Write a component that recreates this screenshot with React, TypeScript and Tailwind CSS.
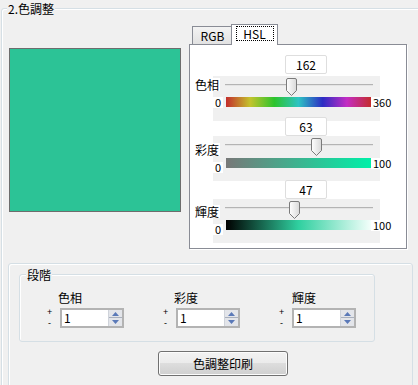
import React from "react";

const HUE_BAR =
  "bg-[linear-gradient(to_right,hsl(0,63%,47%),hsl(60,63%,47%),hsl(120,63%,47%),hsl(180,63%,47%),hsl(240,63%,47%),hsl(300,63%,47%),hsl(360,63%,47%))]";
const SAT_BAR = "bg-[linear-gradient(to_right,hsl(162,0%,47%),hsl(162,100%,47%))]";
const LUM_BAR = "bg-[linear-gradient(to_right,#000000,hsl(162,63%,50%),#f4fffb)]";

type SliderProps = {
  value: number;
  max: number;
  label: string;
  bar: string;
  boxClass: string;
  blockClass: string;
  labelClass: string;
  rowClass: string;
  zeroClass: string;
};

const Thumb = () => (
  <svg width="11" height="18" viewBox="0 0 11 18">
    <defs>
      <linearGradient id="thumbFill" x1="0" y1="0" x2="1" y2="0">
        <stop offset="0" stopColor="#ffffff" />
        <stop offset="1" stopColor="#d9d9d9" />
      </linearGradient>
    </defs>
    <path
      d="M0.5 2 Q0.5 0.5 2 0.5 H9 Q10.5 0.5 10.5 2 V12.5 L5.5 17.5 L0.5 12.5 Z"
      fill="url(#thumbFill)"
      stroke="#7b7b7b"
    />
  </svg>
);

const HslSlider = ({ value, max, label, bar, boxClass, blockClass, labelClass, rowClass, zeroClass }: SliderProps) => {
  const left = Math.floor((value / max) * 137);
  return (
    <div className="flex flex-col">
      <div
        className={`relative z-10 ml-[95px] w-[42px] h-[19px] border border-[#dedede] rounded-[2px] bg-white text-center text-[12px] leading-[17px] ${boxClass}`}
      >
        {value}
      </div>
      <div className={`ml-[23px] w-[167px] bg-[#f0f0f0] ${blockClass}`}>
        <div className="flex items-start pt-[2px]">
          <div className={`shrink-0 -ml-[18px] w-[25px] h-[13px] bg-white text-[12px] leading-[13px] whitespace-nowrap ${labelClass}`}>
            {label}
          </div>
          <div className="relative shrink-0 ml-[5px] w-[148px] h-[18px]">
            <div className="mt-[6px] h-[1px] bg-[#b4b4b4]" />
            <div className="h-[1px] bg-[#e4e4e4]" />
            <div className="absolute top-0" style={{ left }}>
              <Thumb />
            </div>
          </div>
        </div>
        <div className={`flex items-start ${rowClass}`}>
          <div className={`shrink-0 w-[10px] h-[11px] bg-white text-[11px] leading-[11px] pl-[2px] ${zeroClass}`}>0</div>
          <div className={`shrink-0 ml-[3px] w-[145px] h-[10px] ${bar}`} />
          <div className="shrink-0 bg-white pl-[2px] pr-[1px] h-[11px] text-[11px] leading-[11px]">
            {max === 360 ? "360" : "100"}
          </div>
        </div>
      </div>
    </div>
  );
};

const Arrow = ({ up }: { up?: boolean }) => (
  <svg width="7" height="4" viewBox="0 0 7 4">
    <path d={up ? "M0 4 L3.5 0 L7 4 Z" : "M0 0 L3.5 4 L7 0 Z"} fill="#5a79b8" />
  </svg>
);

const SpinBox = ({ label, labelClass }: { label: string; labelClass: string }) => (
  <div className="flex flex-col w-[116px] shrink-0">
    <div className={`h-[12px] text-[12px] leading-[12px] ${labelClass}`}>{label}</div>
    <div className="flex items-start mt-[4px]">
      <div className="w-[13px] shrink-0 -mt-[1px] flex flex-col items-start font-['Liberation_Sans',sans-serif] text-[9px] leading-[11px]">
        <span className="block h-[11px]">+</span>
        <span className="block h-[11px] pl-[1px]">-</span>
      </div>
      <div className="flex w-[64px] h-[20px] border-2 border-[#b3b3b3] bg-white">
        <div className="flex-1 pl-[2px] text-[12px] leading-[16px]">1</div>
        <div className="flex flex-col w-[14px] bg-[#e3e5ea] border-l border-[#cfd3da]">
          <div className="h-[8px] flex items-center justify-center border-b border-[#a9b0bd]">
            <Arrow up />
          </div>
          <div className="h-[8px] flex items-center justify-center">
            <Arrow />
          </div>
        </div>
      </div>
    </div>
  </div>
);

export default function App() {
  return (
    <div className="w-[418px] h-[385px] overflow-hidden bg-[#f0f0f0] text-black font-['Noto_Sans_CJK_JP','Noto_Sans',sans-serif]">
      <div className="relative mt-[8px] ml-[1px] w-[430px] h-[400px] border border-[#d5dfe5] rounded-[3px] shadow-[inset_1px_1px_0_#ffffff]">
        <div className="absolute -top-[7px] left-[5px] px-[1px] bg-[#f0f0f0] text-[12px] leading-[14px]">2.色調整</div>

        <div className="flex items-start">
          <div className="shrink-0 ml-[7px] mt-[39px] w-[172px] h-[164px] border border-[#6d6d6d] bg-[#2cc396]" />

          <div className="shrink-0 ml-[8px] mt-[15px] w-[218px] flex flex-col">
            <div className="flex items-end h-[20px] pl-[3px]">
              <div className="w-[41px] h-[18px] border border-b-0 border-[#898c95] bg-[linear-gradient(to_bottom,#f3f3f3,#e2e2e2)] text-center text-[12px] leading-[17px]">
                RGB
              </div>
              <div className="relative z-10 -ml-[2px] -mb-[1px] w-[47px] h-[21px] border border-b-0 border-[#898c95] bg-white flex justify-center pt-[1px]">
                <div className="w-[38px] h-[15px] border border-dotted border-black text-center text-[12px] leading-[13px]">
                  HSL
                </div>
              </div>
            </div>
            <div className="h-[205px] border border-[#898c95] bg-white shadow-[1px_1px_0_#ffffff] flex flex-col pt-[10px]">
              <HslSlider
                value={162}
                max={360}
                label="色相"
                bar={HUE_BAR}
                boxClass=""
                blockClass="mt-[2px] h-[45px]"
                labelClass="mt-[0px]"
                rowClass="mt-[1px]"
                zeroClass="mt-[0px]"
              />
              <HslSlider
                value={63}
                max={100}
                label="彩度"
                bar={SAT_BAR}
                boxClass="-mt-[4px]"
                blockClass="h-[45px]"
                labelClass="mt-[5px]"
                rowClass="mt-[2px]"
                zeroClass="mt-[4px]"
              />
              <HslSlider
                value={47}
                max={100}
                label="輝度"
                bar={LUM_BAR}
                boxClass="-mt-[1px]"
                blockClass="h-[44px]"
                labelClass="mt-[4px]"
                rowClass="mt-[1px]"
                zeroClass="mt-[4px]"
              />
            </div>
          </div>
        </div>

        <div className="mt-[14px] ml-[6px] w-[405px] h-[130px] border border-[#d5dfe5] rounded-[3px] shadow-[inset_1px_1px_0_#ffffff] flex flex-col">
          <div className="relative mt-[10px] ml-[10px] w-[356px] h-[68px] border border-[#d5dfe5] rounded-[3px] shadow-[inset_1px_1px_0_#ffffff]">
            <div className="absolute -top-[7px] left-[6px] px-[1px] bg-[#f0f0f0] text-[12px] leading-[13px]">段階</div>
            <div className="flex pl-[27px] pt-[17px]">
              <SpinBox label="色相" labelClass="ml-[11px]" />
              <SpinBox label="彩度" labelClass="ml-[11px]" />
              <SpinBox label="輝度" labelClass="ml-[13px]" />
            </div>
          </div>
          <button className="mt-[9px] ml-[149px] w-[130px] h-[25px] rounded-[3px] border border-[#707070] bg-[linear-gradient(to_bottom,#f2f2f2_0%,#ebebeb_50%,#dddddd_50%,#cfcfcf_100%)] shadow-[inset_0_0_0_1px_#fcfcfc] text-[12px] leading-[14px]">
            色調整印刷
          </button>
        </div>
      </div>
    </div>
  );
}
